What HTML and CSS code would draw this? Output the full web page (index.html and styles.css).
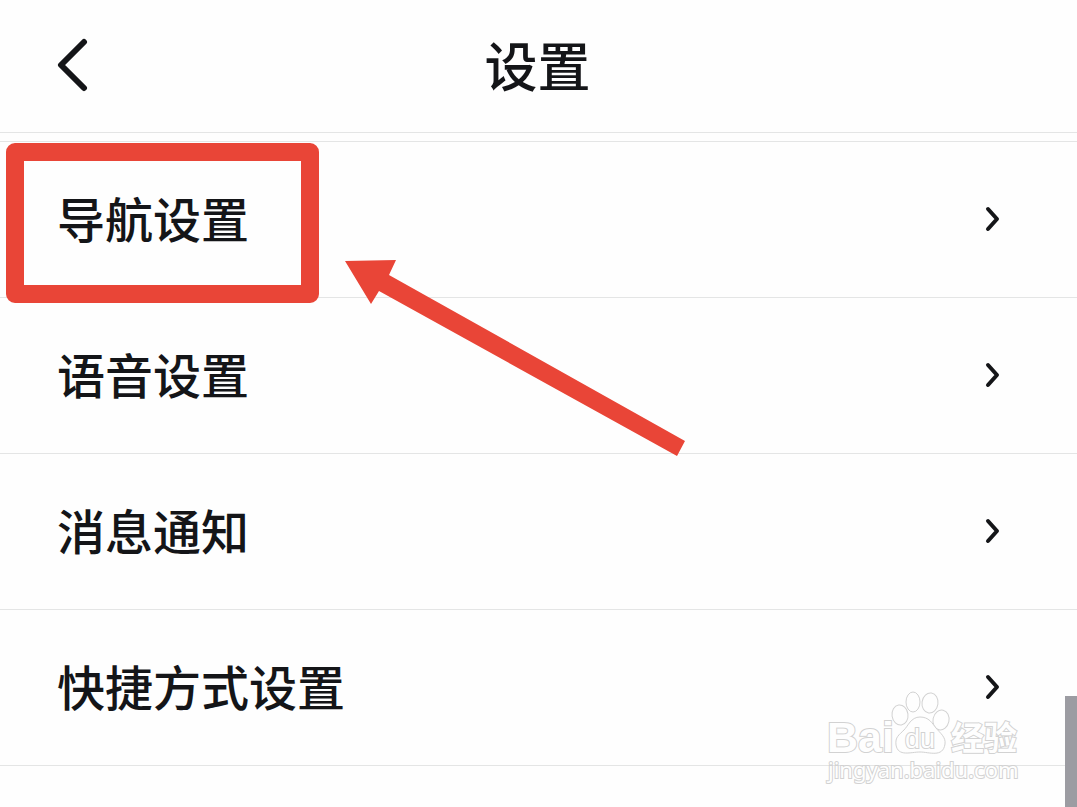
FILE: index.html
```html
<!DOCTYPE html>
<html lang="zh-CN">
<head>
<meta charset="utf-8">
<meta name="viewport" content="width=device-width, initial-scale=1">
<title>设置</title>
<link rel="stylesheet" href="styles.css">
</head>
<body>
<div class="page">
  <header class="header">
    <button class="back" type="button" aria-label="返回">
      <svg class="back-icon" viewBox="0 0 32 54" aria-hidden="true"><path d="M27 4 4 27 27 50"/></svg>
    </button>
    <h1 class="title">设置</h1>
  </header>
  <main class="settings">
    <nav class="list">
      <a class="row" href="#navigation"><span class="label">导航设置</span>
        <svg class="chevron" viewBox="0 0 16 28" aria-hidden="true"><path d="M3 4 12 14 3 24"/></svg></a>
      <a class="row" href="#voice"><span class="label">语音设置</span>
        <svg class="chevron" viewBox="0 0 16 28" aria-hidden="true"><path d="M3 4 12 14 3 24"/></svg></a>
      <a class="row" href="#messages"><span class="label">消息通知</span>
        <svg class="chevron" viewBox="0 0 16 28" aria-hidden="true"><path d="M3 4 12 14 3 24"/></svg></a>
      <a class="row" href="#shortcuts"><span class="label">快捷方式设置</span>
        <svg class="chevron" viewBox="0 0 16 28" aria-hidden="true"><path d="M3 4 12 14 3 24"/></svg></a>
    </nav>
    <div class="highlight"></div>
    <svg class="arrow" viewBox="0 0 342 198" aria-hidden="true"><path d="M0 2 51 1 44 16 340 182 332 197 34 32 26 45Z"/></svg>
  </main>
  <svg class="watermark" viewBox="0 0 210 100" role="img" aria-label="Baidu 经验 jingyan.baidu.com">
    <g class="outline">
      <text class="brand" x="6" y="60">Bai</text>
      <ellipse cx="79" cy="23" rx="8" ry="10" transform="rotate(-8 79 23)"/>
      <ellipse cx="92" cy="10" rx="7" ry="10"/>
      <ellipse cx="109" cy="11" rx="8" ry="10" transform="rotate(8 109 11)"/>
      <ellipse cx="120" cy="28" rx="8" ry="10" transform="rotate(12 120 28)"/>
      <path d="M99 25C90 25 87 34 83 38 78 43 74 45 75 53 77 65 90 60 99 60 108 60 122 66 124 52 125 45 119 41 115 36 111 31 108 25 99 25Z"/>
      <text class="du" x="84" y="56">du</text>
      <text class="experience" x="130" y="58">经验</text>
      <text class="domain" x="7" y="86">jingyan.baidu.com</text>
    </g>
  </svg>
  <div class="scroll-thumb"></div>
</div>
</body>
</html>
```
FILE: styles.css
```css
* { box-sizing: border-box; }
body {
  margin: 0;
  background: #fefefe;
  color: #141518;
  font-family: "Noto Sans CJK SC", sans-serif;
  font-weight: 500;
}
.page {
  position: relative;
  min-height: 100vh;
  overflow: hidden;
}
.header {
  display: grid;
  grid-template-columns: 1fr auto 1fr;
  align-items: center;
  height: 133px;
  padding: 0 56px;
  border-bottom: 1px solid #e4e5e5;
}
.back {
  justify-self: start;
  display: flex;
  padding: 0 0 2px 1px;
  border: 0;
  background: none;
  color: inherit;
}
.back-icon { width: 32px; height: 54px; }
.back-icon path {
  fill: none;
  stroke: currentColor;
  stroke-width: 6;
  stroke-linecap: round;
  stroke-linejoin: round;
}
.title {
  margin: 0;
  padding: 0 2px 4px 0;
  font-size: 53px;
  line-height: 80px;
  font-weight: 500;
}
.settings {
  position: relative;
  margin-top: 8px;
}
.list { border-top: 1px solid #e4e5e5; }
.row {
  display: flex;
  align-items: center;
  justify-content: space-between;
  height: 156px;
  padding: 0 76px 2px 57px;
  border-bottom: 1px solid #e4e5e5;
  color: inherit;
  font-size: 48px;
  line-height: 72px;
  text-decoration: none;
}
.label { padding-bottom: 4px; }
.chevron { width: 16px; height: 28px; }
.chevron path {
  fill: none;
  stroke: currentColor;
  stroke-width: 4;
  stroke-linecap: round;
  stroke-linejoin: round;
}
.highlight {
  position: absolute;
  top: 2px;
  left: 6px;
  width: 313px;
  height: 160px;
  border: 18px solid #e94537;
  border-radius: 9px;
  pointer-events: none;
}
.arrow {
  position: absolute;
  top: 118px;
  left: 345px;
  width: 342px;
  height: 198px;
  fill: #e94537;
  pointer-events: none;
}
.watermark {
  position: absolute;
  right: 46px;
  bottom: 15px;
  width: 210px;
  height: 100px;
  overflow: visible;
  pointer-events: none;
}
.outline {
  fill: #fefefe;
  stroke: #d2d2d2;
  stroke-width: 1;
}
.outline text { paint-order: stroke; stroke-width: 2; }
.brand { font: bold 43px "Liberation Sans", sans-serif; }
.outline .du { font: 27px "Liberation Sans", sans-serif; }
.experience { font: bold 33px "Noto Sans CJK SC", sans-serif; }
.domain { font: 22px "Noto Sans", sans-serif; }
.scroll-thumb {
  position: absolute;
  right: 0;
  bottom: 0;
  width: 12px;
  height: 111px;
  background: #9c9ca2;
}
```
